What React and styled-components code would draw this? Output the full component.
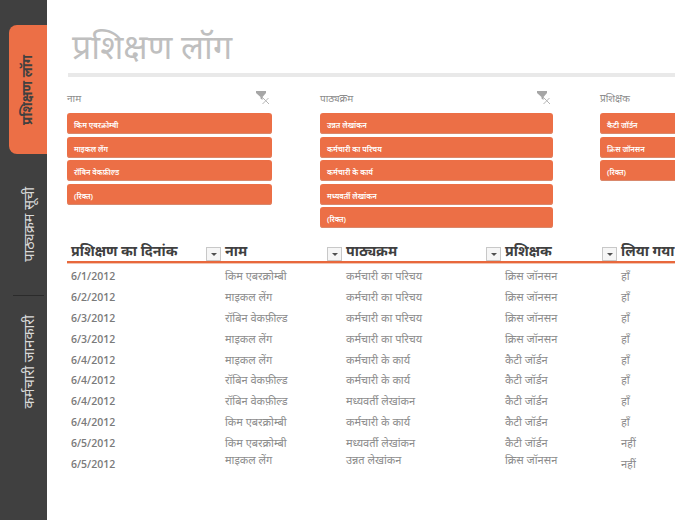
import React from 'react';
import styled, { createGlobalStyle } from 'styled-components';

const GlobalStyle = createGlobalStyle`
  html, body {
    margin: 0;
    padding: 0;
    background: #fff;
    overflow: hidden;
    font-family: "Noto Sans", "Open Sans", "DejaVu Sans", sans-serif;
  }
`;

const Page = styled.div`
  width: 675px;
  height: 520px;
  display: flex;
  overflow: hidden;
`;

const Sidebar = styled.nav`
  width: 47px;
  flex: none;
  box-sizing: border-box;
  padding: 25px 0 0 9px;
  background: #404040;
  display: flex;
  flex-direction: column;
`;

const Tab = styled.div`
  width: 38px;
  height: ${p => p.$height}px;
  display: flex;
  align-items: center;
  justify-content: center;
  background: ${p => (p.$active ? '#ec6f46' : 'transparent')};
  border-radius: ${p => (p.$active ? '8px 0 0 8px' : '0')};
  color: ${p => (p.$active ? '#404040' : '#d9d9d9')};
  font-size: ${p => (p.$active ? 13.5 : 14.5)}px;
  font-weight: ${p => (p.$active ? 700 : 400)};
`;

const TabLabel = styled.span`
  writing-mode: vertical-rl;
  transform: rotate(180deg);
  white-space: nowrap;
  line-height: 1;
`;

const TabDivider = styled.div`
  width: 31px;
  height: 1px;
  margin-left: 4px;
  background: #2b2b2b;
`;

const Main = styled.main`
  flex: 1;
  min-width: 0;
  padding: 27px 0 0 20px;
  overflow: hidden;
`;

const Title = styled.h1`
  margin: 0 0 0 5px;
  height: 46px;
  font-size: 34px;
  line-height: 39px;
  font-weight: 400;
  color: #bfbfbf;
`;

const TitleRule = styled.div`
  height: 4px;
  margin-left: 1px;
  background: #e9e9e9;
`;

const SlicerRow = styled.section`
  display: flex;
  margin-top: 13px;
  height: 150px;
  width: 700px;
`;

const Slicer = styled.div`
  width: ${p => p.$width}px;
  margin-right: ${p => p.$gap}px;
  flex: none;
`;

const SlicerHead = styled.div`
  height: 23px;
  box-sizing: border-box;
  display: flex;
  align-items: center;
  justify-content: space-between;
  padding: 0 2px 7px 0;
  font-size: 10px;
  color: #8c8c8c;
`;

const SlicerItem = styled.div`
  height: 21px;
  margin-bottom: 2.5px;
  box-sizing: border-box;
  padding: 3px 0 0 7px;
  display: flex;
  align-items: center;
  background: #ec6f46;
  border-radius: 3px;
  box-shadow: inset 0 -1px 0 #d9886c;
  color: #fff;
  font-size: 7.5px;
  font-weight: 600;
`;

const TableWrap = styled.section`
  width: 610px;
`;

const HeaderRow = styled.div`
  display: grid;
  grid-template-columns: 154px 121px 159px 116px 60px;
  height: 21px;
  border-bottom: 2px solid #e8683c;
  box-shadow: 0 1px 0 #f3c4b2;
`;

const HeaderCell = styled.div`
  display: flex;
  align-items: center;
  justify-content: space-between;
  padding-left: 4px;
  min-width: 0;
  font-size: 14.2px;
  font-weight: 700;
  color: #404040;
  white-space: nowrap;
`;

const FilterButton = styled.span`
  width: 15px;
  height: 14px;
  align-self: flex-end;
  flex: none;
  box-sizing: border-box;
  display: flex;
  align-items: center;
  justify-content: center;
  background: #f6f6f6;
  border: 1px solid #c8c8c8;

  &::after {
    content: '';
    border-left: 3px solid transparent;
    border-right: 3px solid transparent;
    border-top: 3px solid #505050;
  }
`;

const Rows = styled.div`
  padding-top: 3px;
`;

const Row = styled.div`
  display: grid;
  grid-template-columns: 154px 121px 159px 116px 60px;
  height: 20.8px;
  align-items: center;
`;

const Cell = styled.div`
  padding-left: 4px;
  margin-top: ${p => (p.$raised ? '-8px' : '0')};
  font-size: 11px;
  line-height: 20px;
  color: #8c8c8c;
  white-space: nowrap;
`;

const DateCell = styled(Cell)`
  font-family: "Open Sans", sans-serif;
  font-weight: 600;
  font-size: 10.5px;
  color: #7a7a7a;
`;

const ClearFilter = () => (
  <svg width="14" height="14" viewBox="0 0 14 14">
    <path d="M0 0h10v2L6.5 6v3L4.5 7.5V6L0 2z" fill="#a6a6a6" />
    <path d="M5.5 5.5l7.5 7.5M12.5 7L6.5 13" stroke="#b5b5b5" strokeWidth="1" fill="none" />
  </svg>
);

const slicers = [
  { title: 'नाम', width: 205, gap: 48, clear: true, items: ['किम एबरक्रोम्बी', 'माइकल लेंग', 'रॉबिन वेकफ़ील्ड', '(रिक्त)'] },
  { title: 'पाठ्यक्रम', width: 233, gap: 47, clear: true, items: ['उन्नत लेखांकन', 'कर्मचारी का परिचय', 'कर्मचारी के कार्य', 'मध्यवर्ती लेखांकन', '(रिक्त)'] },
  { title: 'प्रशिक्षक', width: 120, gap: 0, clear: false, items: ['कैटी जॉर्डन', 'क्रिस जॉनसन', '(रिक्त)'] },
];

const columns = ['प्रशिक्षण का दिनांक', 'नाम', 'पाठ्यक्रम', 'प्रशिक्षक', 'लिया गया'];

const rows = [
  ['6/1/2012', 'किम एबरक्रोम्बी', 'कर्मचारी का परिचय', 'क्रिस जॉनसन', 'हाँ'],
  ['6/2/2012', 'माइकल लेंग', 'कर्मचारी का परिचय', 'क्रिस जॉनसन', 'हाँ'],
  ['6/3/2012', 'रॉबिन वेकफ़ील्ड', 'कर्मचारी का परिचय', 'क्रिस जॉनसन', 'हाँ'],
  ['6/3/2012', 'माइकल लेंग', 'कर्मचारी का परिचय', 'क्रिस जॉनसन', 'हाँ'],
  ['6/4/2012', 'माइकल लेंग', 'कर्मचारी के कार्य', 'कैटी जॉर्डन', 'हाँ'],
  ['6/4/2012', 'रॉबिन वेकफ़ील्ड', 'कर्मचारी के कार्य', 'कैटी जॉर्डन', 'हाँ'],
  ['6/4/2012', 'रॉबिन वेकफ़ील्ड', 'मध्यवर्ती लेखांकन', 'कैटी जॉर्डन', 'हाँ'],
  ['6/4/2012', 'किम एबरक्रोम्बी', 'कर्मचारी के कार्य', 'कैटी जॉर्डन', 'हाँ'],
  ['6/5/2012', 'किम एबरक्रोम्बी', 'मध्यवर्ती लेखांकन', 'कैटी जॉर्डन', 'नहीं'],
  ['6/5/2012', 'माइकल लेंग', 'उन्नत लेखांकन', 'क्रिस जॉनसन', 'नहीं'],
];

export default function App() {
  return (
    <Page>
      <GlobalStyle />
      <Sidebar>
        <Tab $active $height={129}><TabLabel>प्रशिक्षण लॉग</TabLabel></Tab>
        <Tab $height={141}><TabLabel>पाठ्यक्रम सूची</TabLabel></Tab>
        <TabDivider />
        <Tab $height={132}><TabLabel>कर्मचारी जानकारी</TabLabel></Tab>
      </Sidebar>
      <Main>
        <Title>प्रशिक्षण लॉग</Title>
        <TitleRule />
        <SlicerRow>
          {slicers.map(s => (
            <Slicer key={s.title} $width={s.width} $gap={s.gap}>
              <SlicerHead>
                <span>{s.title}</span>
                {s.clear && <ClearFilter />}
              </SlicerHead>
              {s.items.map(item => <SlicerItem key={item}>{item}</SlicerItem>)}
            </Slicer>
          ))}
        </SlicerRow>
        <TableWrap>
          <HeaderRow>
            {columns.map(c => (
              <HeaderCell key={c}>
                <span>{c}</span>
                {c !== 'लिया गया' && <FilterButton />}
              </HeaderCell>
            ))}
          </HeaderRow>
          <Rows>
            {rows.map((r, i) => (
              <Row key={i}>
                <DateCell>{r[0]}</DateCell>
                <Cell $raised={i === 9}>{r[1]}</Cell>
                <Cell $raised={i === 9}>{r[2]}</Cell>
                <Cell $raised={i === 9}>{r[3]}</Cell>
                <Cell>{r[4]}</Cell>
              </Row>
            ))}
          </Rows>
        </TableWrap>
      </Main>
    </Page>
  );
}
